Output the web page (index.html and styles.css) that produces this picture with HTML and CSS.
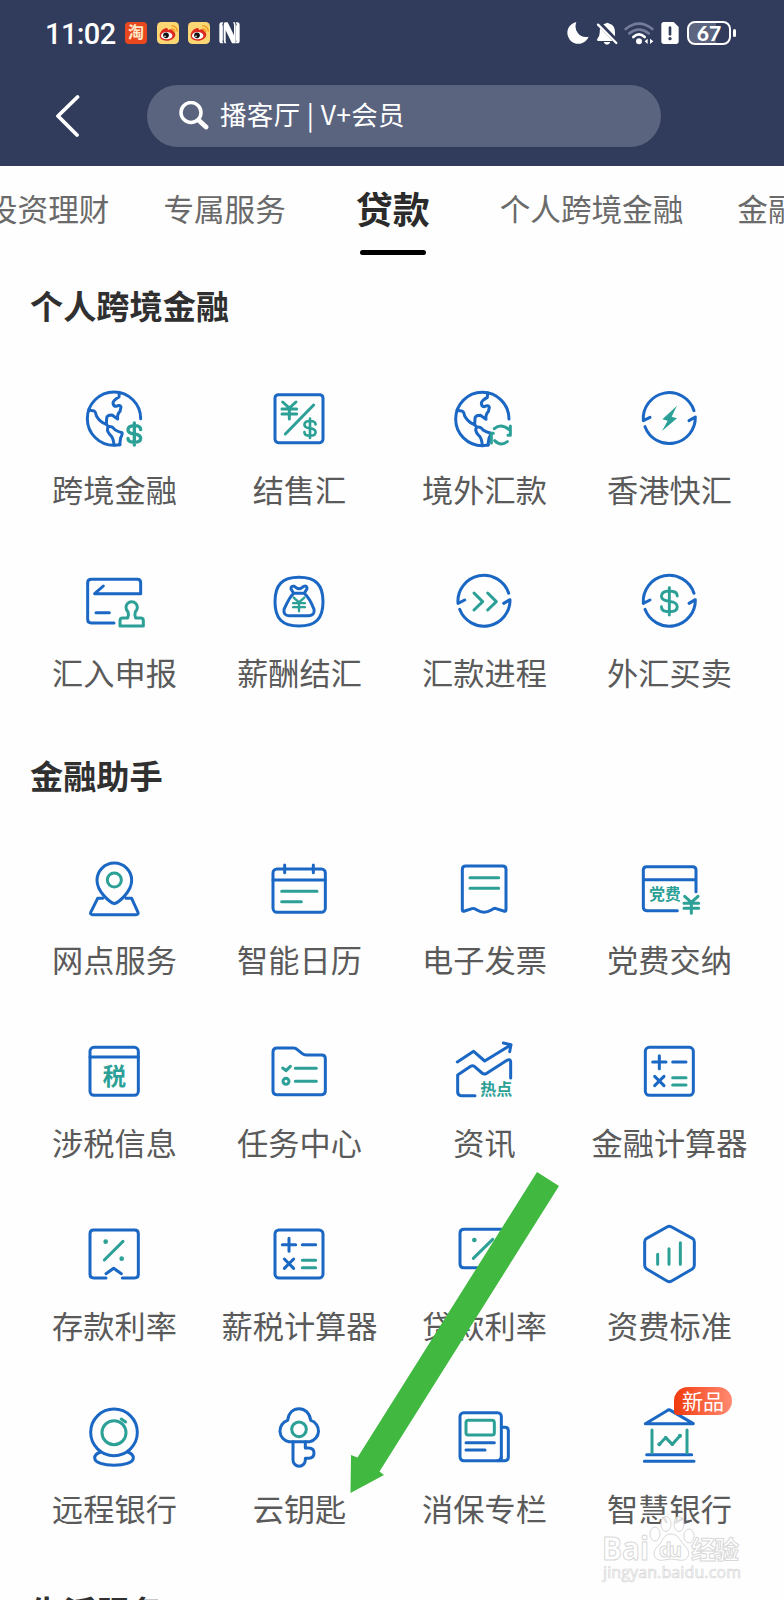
FILE: index.html
```
<!DOCTYPE html>
<html lang="zh-CN">
<head>
    <meta charset="UTF-8">
    <meta name="viewport" content="width=device-width, initial-scale=1.0">
    <title>贷款</title>
    <link rel="stylesheet" href="styles.css">
</head>
<body>
    <!-- Shared icon parts -->
    <svg class="defs" width="0" height="0">
        <defs>
            <path id="dollar" d="M19 -13C19 -21 11 -25 0 -25S-19 -21 -19 -12S-9 -1 0 0S19 4 19 13S11 25 0 25S-19 21 -19 13M0 -33V33"/>
            <path id="yen" d="M-20 -18L0 0L20 -18M0 0V33M-22 3H22M-22 18H22"/>
            <g id="globe">
                <path d="M176 95A80 80 0 1 0 96 175L114 173"/>
                <path d="M112 17L111 30Q93 40 93 48Q94 58 102 58Q115 52 117 60L114 73Q105 81 107 96L90 84Q74 84 74 94L73 112Q54 106 43 86Q40 70 33 71L20 69"/>
                <path d="M73 112L79 119Q90 118 94 123Q100 132 120 137Q122 142 116 152L113 173M79 119Q72 130 84 143Q94 150 96 174"/>
            </g>
            <g id="cycle">
                <path d="M39 91L19 101A78 78 0 0 1 171 71"/>
                <path d="M24 119A78 78 0 0 0 175 90L156 101"/>
            </g>
            <g id="calc">
                <rect x="25" y="22" width="144" height="144" rx="12"/>
                <path d="M67 47V86M47 66H87M107 66H147M53 109L81 137M81 109L53 137"/>
                <path class="green" d="M107 113H147M107 135H147"/>
            </g>
            <g id="weibo">
                <rect width="66" height="66" rx="13" fill="#fbd672"/>
                <path d="M8 40C8 29 20 18 28 18Q34 18 33 24Q46 18 48 27Q55 30 55 38C55 48 42 56 29 56S8 50 8 40Z" fill="#dc2a22"/>
                <ellipse cx="29" cy="41" rx="17" ry="11" fill="#fff"/>
                <circle cx="27" cy="40" r="8.500" fill="#111"/>
                <circle cx="24" cy="43" r="2.500" fill="#fff"/>
                <path d="M44 20Q53 21 53 31M43 11Q60 12 61 29" fill="none" stroke="#f39a1d" stroke-width="4"/>
            </g>
        </defs>
    </svg>

    <div class="screen">
        <header class="header">
            <div class="status-bar">
                <span class="time">11:02</span>
                <div class="notices">
                    <span class="app-taobao">淘</span>
                    <svg width="22" height="22" viewBox="0 0 66 66"><use href="#weibo"/></svg>
                    <svg width="22" height="22" viewBox="0 0 66 66"><use href="#weibo"/></svg>
                    <svg class="nfc" width="21" height="22" viewBox="0 0 63 66">
                        <path d="M13 1H8Q1 1 1 9V56Q1 64 8 64H13Q9 58 9 50V16Q9 7 13 1ZM50 1H55Q62 1 62 9V56Q62 64 55 64H50Q54 58 54 50V16Q54 7 50 1Z" fill="#fff"/>
                        <path d="M17 1H26L45 40V10Q45 5 42 1H47Q50 5 50 12V64H39L20 25V56Q20 61 22 64H17Q14 60 14 52V10Q14 4 17 1Z" fill="#fff"/>
                        <path d="M9 10V56M53 10V56" stroke="#fff" stroke-width="5"/>
                    </svg>
                </div>
                <div class="system">
                    <svg width="22" height="24" viewBox="0 0 66 72"><path d="M28 3A33 33 0 1 0 65 47Q45 52 33 37T28 3Z" fill="#fff"/></svg>
                    <svg class="bell" width="22" height="24" viewBox="0 0 66 72">
                        <path d="M22 10Q28 7 29 8Q33 2 40 8C54 12 57 22 57 36V46Z" fill="#fff"/>
                        <path d="M12 22L50 60H6Q1 59 4 53Q11 46 11 36Z" fill="#fff"/>
                        <path d="M6 11L61 66" stroke="#fff" stroke-width="7" stroke-linecap="round"/>
                        <path d="M23 63H43Q40 71 33 71T23 63Z" fill="#fff"/>
                    </svg>
                    <svg class="wifi" width="30" height="24" viewBox="0 0 90 72" fill="none" stroke-width="8" stroke-linecap="round">
                        <path d="M5 24Q45 -8 85 24M16 37Q45 14 74 37" stroke="#747c99"/>
                        <path d="M28 48Q45 32 62 48" stroke="#fff"/>
                        <circle cx="45" cy="61" r="9" fill="#fff"/>
                        <path d="M71 53V69L62 61ZM78 53V69L88 61Z" fill="#fff"/>
                    </svg>
                    <svg class="sim" width="18" height="24" viewBox="0 0 54 72">
                        <path d="M9 3H38L53 18V61Q53 69 45 69H9Q1 69 1 61V11Q1 3 9 3Z" fill="#fff"/>
                        <path d="M27 20V40" stroke="#313b5b" stroke-width="8" stroke-linecap="round"/>
                        <circle cx="27" cy="53" r="5" fill="#313b5b"/>
                    </svg>
                    <span class="battery">67</span>
                    <span class="battery-tip"></span>
                </div>
            </div>
            <div class="nav-bar">
                <svg class="back" width="26" height="44" viewBox="0 0 26 44"><path d="M23.500 3L4 22L23 41" fill="none" stroke="#fff" stroke-width="3.800" stroke-linecap="round" stroke-linejoin="round"/></svg>
                <div class="search">
                    <svg width="30" height="30" viewBox="0 0 30 30" fill="none" stroke="#fff" stroke-linecap="round">
                        <circle cx="12" cy="11.500" r="10" stroke-width="3.500"/>
                        <path d="M20 19.500L27 26" stroke-width="4.800"/>
                    </svg>
                    <span>播客厅 | V+会员</span>
                </div>
            </div>
        </header>

        <nav class="tabs">
            <span class="tab">投资理财</span>
            <span class="tab">专属服务</span>
            <span class="tab active">贷款</span>
            <span class="tab">个人跨境金融</span>
            <span class="tab">金融助手</span>
        </nav>

        <section class="section">
            <h2>个人跨境金融</h2>
            <div class="grid">
                <div class="item">
                    <svg class="icon" viewBox="0 0 192 192"><use href="#globe"/><use class="green bold" href="#dollar" x="157" y="141"/></svg>
                    <span>跨境金融</span>
                </div>
                <div class="item">
                    <svg class="icon" viewBox="0 0 192 192">
                        <rect x="24" y="23" width="144" height="144" rx="10"/>
                        <g class="green"><use href="#yen" x="67" y="63"/><path d="M140 54L55 141"/><use href="#dollar" transform="translate(129 124) scale(.88)"/></g>
                    </svg>
                    <span>结售汇</span>
                </div>
                <div class="item">
                    <svg class="icon" viewBox="0 0 192 192">
                        <use href="#globe" x="-5" y="1"/>
                        <path class="green" d="M127 125Q147 108 170 127M175 117V145H168M118 168V139H124M128 161Q146 179 166 164"/>
                    </svg>
                    <span>境外汇款</span>
                </div>
                <div class="item">
                    <svg class="icon" viewBox="0 0 192 192"><use href="#cycle"/><path class="bolt" d="M120 56L76 97L92 101L75 132L120 94L104 89Z"/></svg>
                    <span>香港快汇</span>
                </div>
                <div class="item">
                    <svg class="icon" viewBox="0 0 192 192">
                        <path d="M64 48L38 71H176V38Q176 28 166 28H28Q17 28 17 38V148Q17 159 28 159H96M42 128H82"/>
                        <path class="green" d="M137 144Q141 133 138 125A17 17 0 1 1 160 125Q157 133 161 144H176Q184 144 184 152V168H114V152Q114 144 122 144Z"/>
                    </svg>
                    <span>汇入申报</span>
                </div>
                <div class="item">
                    <svg class="icon" viewBox="0 0 192 192">
                        <path d="M96 22C146 22 168 44 168 95S146 168 96 168S24 146 24 95S46 22 96 22Z"/>
                        <path d="M80 70L72 57Q71 47 82 49Q90 56 96 56T110 49Q121 46 120 56L112 70ZM80 70Q68 80 51 118Q49 137 66 137H126Q144 136 141 118Q128 84 112 70"/>
                        <use class="green" href="#yen" transform="translate(96 97) scale(.8)"/>
                    </svg>
                    <span>薪酬结汇</span>
                </div>
                <div class="item">
                    <svg class="icon" viewBox="0 0 192 192"><use href="#cycle" x="-1" y="-1"/><path class="green" d="M66 69L92 95L66 120M107 69L133 95L107 120"/></svg>
                    <span>汇款进程</span>
                </div>
                <div class="item">
                    <svg class="icon" viewBox="0 0 192 192"><use href="#cycle" y="-1"/><use class="green thin" href="#dollar" transform="translate(97 94) scale(1.25)"/></svg>
                    <span>外汇买卖</span>
                </div>
            </div>
        </section>

        <section class="section">
            <h2>金融助手</h2>
            <div class="grid">
                <div class="item">
                    <svg class="icon" viewBox="0 0 192 192">
                        <path d="M97 140C84 136 45 105 45 70A52 52 0 0 1 149 70C149 105 110 136 97 140Z"/>
                        <path d="M62 124H47L26 166Q24 173 32 173H162Q170 173 168 166L149 124H132"/>
                        <circle class="green" cx="97" cy="69" r="21"/>
                    </svg>
                    <span>网点服务</span>
                </div>
                <div class="item">
                    <svg class="icon" viewBox="0 0 192 192">
                        <rect x="18" y="36" width="157" height="130" rx="12"/>
                        <path d="M18 69H175M53 24V47M139 24V47"/>
                        <path class="green" d="M44 103H150M44 134H103"/>
                    </svg>
                    <span>智能日历</span>
                </div>
                <div class="item">
                    <svg class="icon" viewBox="0 0 192 192">
                        <path d="M31 37Q31 27 41 27H152Q162 27 162 37V158Q162 165 155 162L130 154Q125 154 118 159Q96 172 75 159Q67 153 60 155L38 162Q31 165 31 158Z"/>
                        <path class="green" d="M54 62H140M54 94H140"/>
                    </svg>
                    <span>电子发票</span>
                </div>
                <div class="item">
                    <svg class="icon" viewBox="0 0 192 192">
                        <path d="M121 161H29Q19 161 19 151V39Q19 29 29 29H167Q177 29 177 39V104M19 68H177"/>
                        <text x="37" y="130" font-size="47">党费</text>
                        <use class="green" href="#yen" x="163" y="136"/>
                    </svg>
                    <span>党费交纳</span>
                </div>
                <div class="item">
                    <svg class="icon" viewBox="0 0 192 192">
                        <rect x="24" y="22" width="145" height="144" rx="12"/>
                        <path d="M24 51H169"/>
                        <text x="62" y="134" font-size="70">税</text>
                    </svg>
                    <span>涉税信息</span>
                </div>
                <div class="item">
                    <svg class="icon" viewBox="0 0 192 192">
                        <path d="M30 24H80Q86 24 91 29L106 41Q111 45 118 45H164Q175 45 175 56V153Q175 164 164 164H29Q18 164 18 153V36Q18 24 30 24Z"/>
                        <path class="green" d="M47 84L57 92L70 79M85 85H148M85 124H148"/>
                        <circle class="green" cx="57" cy="124" r="9"/>
                    </svg>
                    <span>任务中心</span>
                </div>
                <div class="item">
                    <svg class="icon" viewBox="0 0 192 192">
                        <path d="M16 66L65 34L98 63L176 15M154 9L177 14L173 35"/>
                        <path d="M69 167H28Q17 167 17 156V105L56 79Q62 75 67 79L90 99Q96 104 102 101L165 61Q176 55 176 66V114"/>
                        <text x="85" y="166" font-size="48">热点</text>
                    </svg>
                    <span>资讯</span>
                </div>
                <div class="item">
                    <svg class="icon" viewBox="0 0 192 192"><use href="#calc"/></svg>
                    <span>金融计算器</span>
                </div>
                <div class="item">
                    <svg class="icon" viewBox="0 0 192 192">
                        <path d="M72 165H35Q24 165 24 154V32Q24 21 35 21H158Q169 21 169 32V154Q169 165 158 165H121M72 152L95 136L118 152"/>
                        <path class="green" d="M123 55L67 111"/>
                        <circle class="dot" cx="71" cy="56" r="7"/><circle class="dot" cx="119" cy="107" r="7"/>
                    </svg>
                    <span>存款利率</span>
                </div>
                <div class="item">
                    <svg class="icon" viewBox="0 0 192 192"><use href="#calc" x="-1" y="-1"/></svg>
                    <span>薪税计算器</span>
                </div>
                <div class="item">
                    <svg class="icon" viewBox="0 0 192 192">
                        <path d="M150 19H36Q24 19 24 31V122Q24 134 36 134H120"/>
                        <path class="green" d="M122 49L64 106"/>
                        <circle class="dot" cx="67" cy="51" r="7"/>
                    </svg>
                    <span>贷款利率</span>
                </div>
                <div class="item">
                    <svg class="icon" viewBox="0 0 192 192">
                        <path d="M90 12Q97 8 104 12L166 46Q172 50 172 57V127Q172 134 166 138L104 174Q97 178 90 174L29 138Q23 134 23 127V57Q23 50 29 46Z"/>
                        <path class="green" d="M62 94V124M96 77V124M130 59V124"/>
                    </svg>
                    <span>资费标准</span>
                </div>
                <div class="item">
                    <svg class="icon" viewBox="0 0 192 192">
                        <circle cx="96" cy="79" r="70"/>
                        <path d="M56 138Q38 144 38 156C38 170 66 178 96 178S154 170 154 156Q154 144 137 138"/>
                        <circle class="green" cx="96" cy="80" r="36"/>
                        <path class="green" d="M118 39L131 48"/>
                    </svg>
                    <span>远程银行</span>
                </div>
                <div class="item">
                    <svg class="icon" viewBox="0 0 192 192">
                        <path d="M66 107A33 33 0 0 1 62 43C65 20 79 8 96 8S128 20 131 43A33 33 0 0 1 128 107Z"/>
                        <path d="M78 107V162A18 18 0 0 0 115 162V157H125Q141 156 141 141T125 126H115V107"/>
                        <circle class="green" cx="96" cy="70" r="22"/>
                    </svg>
                    <span>云钥匙</span>
                </div>
                <div class="item">
                    <svg class="icon" viewBox="0 0 192 192">
                        <rect x="24" y="20" width="124" height="144" rx="11"/>
                        <path d="M148 64H159Q169 64 169 74V153Q169 164 159 164H137Q148 164 148 153M42 110H127M42 132H99"/>
                        <rect class="green" x="42" y="43" width="85" height="44" rx="7"/>
                    </svg>
                    <span>消保专栏</span>
                </div>
                <div class="item">
                    <svg class="icon" viewBox="0 0 192 192">
                        <path d="M25 53L90 14Q96 9 102 14L169 53ZM29 146H164M22 166H171"/>
                        <path class="green" d="M45 72V141M150 72V141M67 115L86 95L106 115L129 89"/>
                        <circle class="dot" cx="67" cy="115" r="6"/><circle class="dot" cx="86" cy="96" r="6"/><circle class="dot" cx="106" cy="114" r="6"/><circle class="dot" cx="129" cy="89" r="6"/>
                    </svg>
                    <em class="badge">新品</em>
                    <span>智慧银行</span>
                </div>
            </div>
        </section>

        <section class="section">
            <h2>生活服务</h2>
        </section>

        <svg class="pointer" width="210" height="324" viewBox="0 0 210 324"><path d="M187 2L209 16L29.500 301.500L34 305L0.500 323L1 285L7.500 287.500Z" fill="#41b941"/></svg>

        <svg class="watermark" width="144" height="72" viewBox="0 0 144 72">
            <g class="paw">
                <ellipse cx="54" cy="20" rx="5" ry="7"/>
                <ellipse cx="65" cy="10" rx="5" ry="7.500"/>
                <ellipse cx="78" cy="10" rx="5" ry="7.500"/>
                <ellipse cx="88" cy="22" rx="5" ry="7"/>
                <path d="M70 20C78 20 79 28 85 33C91 40 86 48 78 46Q70 44 63 46C54 48 50 40 56 33C62 28 62 20 70 20Z"/>
            </g>
            <text x="1" y="46" font-size="32" textLength="47" lengthAdjust="spacingAndGlyphs">Bai</text>
            <text x="58" y="43" font-size="20" textLength="23">du</text>
            <text x="90" y="45" font-size="25" textLength="48">经验</text>
            <text class="url" x="2" y="64" font-size="16" textLength="138">jingyan.baidu.com</text>
        </svg>
    </div>
</body>
</html>
```
FILE: styles.css
```
* {
    margin: 0;
    padding: 0;
    box-sizing: border-box;
}

body {
    font-family: 'Noto Sans CJK SC', sans-serif;
    background: #fefefe;
    color: #5a5a5a;
}

.defs {
    position: absolute;
}

.screen {
    position: relative;
    width: 784px;
    height: 1600px;
    overflow: hidden;
}

/* Header */
.header {
    height: 166px;
    background: #313b5b;
    color: #fff;
}

.status-bar {
    height: 66px;
    padding: 0 48px 0 45px;
    display: flex;
    align-items: center;
}

.time {
    width: 80px;
    padding-top: 2px;
    font: 500 29px/32px Roboto, sans-serif;
    letter-spacing: -0.6px;
    white-space: nowrap;
}

.notices {
    display: flex;
    align-items: center;
    gap: 9.5px;
}

.nfc {
    margin-left: -1px;
}

.app-taobao {
    width: 22px;
    height: 22px;
    border-radius: 4px;
    background: #e9481f;
    color: #ffe9c8;
    font-size: 16px;
    font-weight: bold;
    line-height: 18px;
    text-align: center;
}

.system {
    margin-left: auto;
    display: flex;
    align-items: center;
}

.bell {
    margin-left: 7px;
}

.wifi {
    margin-left: 6px;
}

.sim {
    margin-left: 7px;
}

.battery {
    width: 44px;
    height: 24px;
    margin-left: 8px;
    border: 2px solid #fff;
    border-radius: 8px;
    background: linear-gradient(90deg, #5c6480 67%, #313b5b 67%);
    font: 900 21px/20px Lato, sans-serif;
    text-align: center;
}

.battery-tip {
    width: 3px;
    height: 8px;
    margin-left: 2px;
    border-radius: 2px;
    background: #fff;
}

.nav-bar {
    height: 100px;
    padding-left: 54px;
    display: flex;
    align-items: center;
}

.back {
    margin-bottom: 1px;
}

.search {
    width: 514px;
    height: 62px;
    margin-left: 67px;
    padding-left: 32px;
    border-radius: 31px;
    background: #5b647f;
    display: flex;
    align-items: center;
    gap: 11px;
    font-size: 26.5px;
    line-height: 40px;
    letter-spacing: 0.35px;
    white-space: pre;
}

.search span {
    padding-bottom: 4px;
}

/* Tabs */
.tabs {
    height: 90px;
    margin-left: -13px;
    display: flex;
    gap: 54px;
    font-size: 30.6px;
    line-height: 84px;
    white-space: nowrap;
    color: #6a6a6a;
}

.tab {
    flex: none;
}

.tab.active {
    position: relative;
    margin: 0 16px;
    font-size: 37px;
    font-weight: bold;
    color: #2b2b2b;
}

.tab.active::after {
    content: '';
    position: absolute;
    left: 4px;
    bottom: 1px;
    width: 66px;
    height: 5px;
    border-radius: 3px;
    background: #000;
}

/* Sections */
.section {
    padding: 29px 22px 0;
}

.section + .section {
    padding-top: 61px;
}

h2 {
    padding-left: 8px;
    font-size: 33.2px;
    line-height: 40px;
    color: #303030;
}

.grid {
    margin-top: 62px;
    display: grid;
    grid-template-columns: repeat(4, 185px);
    row-gap: 59px;
}

.item {
    position: relative;
    height: 124px;
    display: flex;
    flex-direction: column;
    align-items: center;
    gap: 18px;
    font-size: 31.2px;
    line-height: 40px;
    white-space: nowrap;
}

.icon {
    width: 64px;
    height: 64px;
    margin-right: 2px;
    flex: none;
    fill: none;
    stroke: #1b67c4;
    stroke-width: 9;
    stroke-linecap: round;
    stroke-linejoin: round;
}

.green {
    stroke: #2ca096;
}

.bold {
    stroke-width: 10;
}

.thin {
    stroke-width: 7;
}

.icon text {
    fill: #2ca096;
    stroke: none;
    font-weight: bold;
}

.bolt,
.dot {
    fill: #2ca096;
    stroke: none;
}

.badge {
    position: absolute;
    top: -19px;
    left: 97px;
    width: 58px;
    height: 28px;
    border-radius: 14px 14px 14px 4px;
    background: linear-gradient(90deg, #f23a0d, #ff8a72);
    color: #fff;
    font-size: 21px;
    font-style: normal;
    line-height: 27px;
    text-align: center;
}

/* Overlays */
.pointer {
    position: absolute;
    left: 350px;
    top: 1170px;
}

.watermark {
    position: absolute;
    left: 601px;
    top: 1514px;
    fill: #fff;
    stroke: #d8d8d8;
    stroke-width: 1;
    font-family: 'Open Sans', 'Noto Sans CJK SC', sans-serif;
    font-weight: bold;
}

.paw {
    fill: rgba(255, 255, 255, 0.8);
}

.watermark .url {
    stroke-width: 0.7;
    font-weight: normal;
}
```
